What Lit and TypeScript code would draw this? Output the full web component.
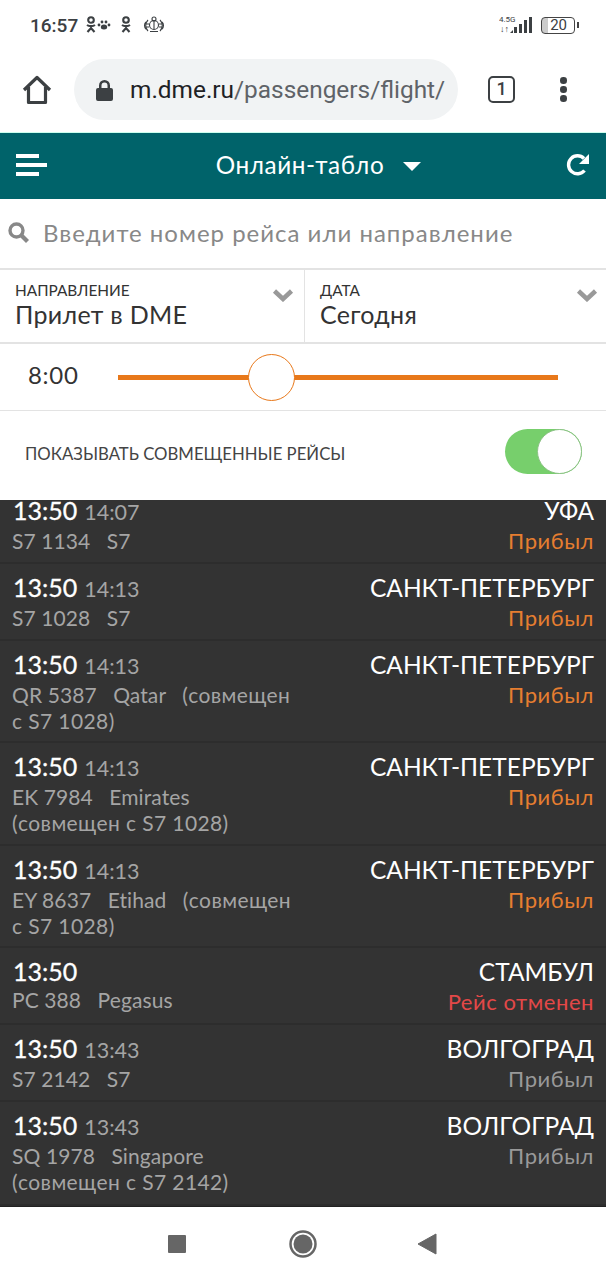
import { LitElement, html, css } from "lit";
import { customElement } from "lit/decorators.js";

interface Flight { sched: string; actual?: string; code: string; air: string; note?: string; br?: boolean; city: string; status: string; kind: "o" | "r" | "g"; h: number; }

const F: Flight[] = [
  { sched: "13:50", actual: "14:07", code: "S7 1134", air: "S7", city: "УФА", status: "Прибыл", kind: "o", h: 64 },
  { sched: "13:50", actual: "14:13", code: "S7 1028", air: "S7", city: "САНКТ-ПЕТЕРБУРГ", status: "Прибыл", kind: "o", h: 77 },
  { sched: "13:50", actual: "14:13", code: "QR 5387", air: "Qatar", note: "(совмещен с S7 1028)", city: "САНКТ-ПЕТЕРБУРГ", status: "Прибыл", kind: "o", h: 102 },
  { sched: "13:50", actual: "14:13", code: "EK 7984", air: "Emirates", note: "(совмещен с S7 1028)", br: true, city: "САНКТ-ПЕТЕРБУРГ", status: "Прибыл", kind: "o", h: 103 },
  { sched: "13:50", actual: "14:13", code: "EY 8637", air: "Etihad", note: "(совмещен с S7 1028)", city: "САНКТ-ПЕТЕРБУРГ", status: "Прибыл", kind: "o", h: 102 },
  { sched: "13:50", code: "PC 388", air: "Pegasus", city: "СТАМБУЛ", status: "Рейс отменен", kind: "r", h: 77 },
  { sched: "13:50", actual: "13:43", code: "S7 2142", air: "S7", city: "ВОЛГОГРАД", status: "Прибыл", kind: "g", h: 77 },
  { sched: "13:50", actual: "13:43", code: "SQ 1978", air: "Singapore", note: "(совмещен с S7 2142)", br: true, city: "ВОЛГОГРАД", status: "Прибыл", kind: "g", h: 104 },
];

@customElement("app-root")
export class AppRoot extends LitElement {
  static styles = css`
    :host { display: block; width: 606px; height: 1280px; overflow: hidden; background: #fff; font-family: Lato, "Open Sans", "Noto Sans", sans-serif; }
    * { box-sizing: border-box; }
    .status { height: 50px; display: flex; align-items: center; justify-content: space-between; padding: 0 31px 0 30px; color: #3c4043; font-family: Roboto, sans-serif; }
    .st-left { display: flex; align-items: center; gap: 8px; font-size: 19px; font-weight: 500; }
    .st-right { display: flex; align-items: center; gap: 8px; }
    .batt { width: 34px; height: 17px; border: 1.5px solid #444; border-radius: 4px; font-size: 15px; line-height: 14px; text-align: right; padding-right: 7px; background: linear-gradient(90deg,#ccc 6px,#fff 6px); position: relative; }
    .batt::after { content: ""; position: absolute; right: -5px; top: 4px; width: 2px; height: 6px; background: #444; }
    .chrome { height: 82px; display: flex; align-items: center; padding: 0 24px 3px 22px; }
    .omni { margin-left: 22px; width: 384px; height: 61px; border-radius: 31px; background: #f1f3f4; display: flex; align-items: center; padding-left: 22px; gap: 17px; overflow: hidden; }
    .url { font: 24.400px/30px Roboto, sans-serif; white-space: nowrap; color: #5f6368; width: 316px; overflow: hidden; }
    .url b { font-weight: 400; color: #202124; }
    .tabs { margin-left: 30px; width: 27px; height: 27px; border: 2.5px solid #3c4043; border-radius: 5px; font: 500 18px/22px Roboto, sans-serif; color: #3c4043; text-align: center; }
    .dots { margin-left: 45px; display: flex; flex-direction: column; gap: 2.5px; }
    .dots i { width: 6.5px; height: 6.5px; border-radius: 50%; background: #3c4043; }
    .bar { height: 67px; background: #00636a; color: #fff; display: flex; align-items: center; justify-content: space-between; padding: 0 16px 3px; border-top: 1px solid #cfe; }
    .title { display: flex; align-items: center; gap: 19px; font-size: 24.3px; letter-spacing: .6px; margin-left: 24px; }
    .tri { width: 0; height: 0; border: 9.5px solid transparent; border-top: 9px solid #fff; border-bottom: 0; margin-top: 4px; }
    .search { height: 71px; display: flex; align-items: center; padding: 0 8px 2px; gap: 14px; border-bottom: 2px solid #e3e3e3; color: #888; font-size: 24px; letter-spacing: 1px; }
    .selects { height: 74px; display: flex; border-bottom: 2px solid #e3e3e3; color: #333; }
    .sel { flex: 0 0 305px; position: relative; padding: 11px 15px 0; border-right: 1px solid #e3e3e3; }
    .sel + .sel { flex: 1; border-right: 0; }
    .lab { font-size: 15.400px; line-height: 18px; }
    .val { font-size: 25px; line-height: 30px; letter-spacing: .3px; }
    .chev { position: absolute; right: 10px; top: 18px; }
    .sel + .sel .chev { right: 8px; }
    .slide { height: 67px; display: flex; align-items: center; padding-left: 28px; border-bottom: 1px solid #e3e3e3; }
    .time { width: 90px; font-size: 24px; color: #333; letter-spacing: .7px; margin-bottom: 6px; }
    .track { position: relative; width: 440px; height: 5px; background: #e8781a; }
    .thumb { position: absolute; left: 130px; top: -21px; width: 47px; height: 47px; border-radius: 50%; background: #fff; border: 1.5px solid #e8781a; }
    .toggle-row { height: 89px; display: flex; align-items: center; justify-content: space-between; padding: 0 24px 0 25px; font-size: 16.750px; color: #444; }
    .toggle { width: 77px; height: 45px; border-radius: 23px; background: #77cf6c; position: relative; margin-top: -8px; }
    .toggle i { position: absolute; right: 0; top: 0; width: 45px; height: 45px; border-radius: 50%; background: #fff; border: 1.5px solid #8cc285; }
    .toggle-label { margin-top: -4px; }
    .list { background: #333; height: 707px; overflow: hidden; border-bottom: 1px solid #222; }
    .row { display: flex; justify-content: space-between; padding: 0 12px 0 13px; border-bottom: 2px solid #2d2d2d; }
    .left { width: 285px; padding-top: 7px; }
    .row:first-child .left, .row:first-child .right { padding-top: 0; margin-top: -6px; }
    .times { display: flex; align-items: baseline; gap: 7px; color: #fff; font-size: 25px; line-height: 33px; -webkit-text-stroke: .3px #fff; }
    .act { color: #a5a5a5; font-size: 21.500px; -webkit-text-stroke: 0; }
    .info { color: #a5a5a5; font-size: 21px; line-height: 26px; margin: -1.5px 0 0 -1px; white-space: pre-wrap; letter-spacing: .1px; }
    .note { letter-spacing: .4px; }
    .right { text-align: right; padding-top: 7px; }
    .city { color: #fff; font-size: 24.500px; line-height: 33px; }
    .stat { font-size: 22px; line-height: 25px; letter-spacing: .55px; margin-top: 1px; }
    .o { color: #e67e30; } .r { color: #e34848; } .g { color: #999; }
    .nav { height: 73px; display: flex; align-items: center; justify-content: center; padding: 1px 2px 0 0; }
    .nav svg { display: block; }
    .gap-a { margin-left: 102px; }
    .gap-b { margin-left: 100px; }
  `;

  private flight(f: Flight) {
    const sep = "   ";
    return html`<div class="row" style="height:${f.h}px">
      <div class="left">
        <div class="times"><span>${f.sched}</span>${f.actual ? html`<span class="act">${f.actual}</span>` : ""}</div>
        <div class="info">${f.code}${sep}${f.air}${f.note ? (f.br ? html`<br /><span class="note">${f.note}</span>` : html`${sep}<span class="note">${f.note}</span>`) : ""}</div>
      </div>
      <div class="right">
        <div class="city">${f.city}</div>
        <div class="stat ${f.kind}">${f.status}</div>
      </div>
    </div>`;
  }

  render() {
    const chev = html`<svg class="chev" width="22" height="14" viewBox="0 0 22 14"><path d="M2.500 3 11 11 19.500 3" fill="none" stroke="#999" stroke-width="4.500"/></svg>`;
    return html`
      <div class="status">
        <div class="st-left"><span>16:57</span>
          <svg width="86" height="18" viewBox="0 0 86 18" fill="none" stroke="#3c4043" stroke-width="2.100">
            <circle cx="5" cy="4" r="2.800"/><path d="M1 9c2 1.500 6 1.500 8 0M5 10v2M1.500 16 5 12l3.500 4"/>
            <g fill="#3c4043" stroke="none"><circle cx="13" cy="9" r="1.400"/><circle cx="16" cy="6" r="1.400"/><circle cx="20" cy="6" r="1.400"/><circle cx="23" cy="9" r="1.400"/><ellipse cx="18" cy="11" rx="3.200" ry="2.500"/></g>
            <circle cx="40" cy="4" r="2.800"/><path d="M36 9c2 1.500 6 1.500 8 0M40 10v2M36.500 16 40 12l3.500 4"/>
            <g stroke-width="1.100"><circle cx="68" cy="9" r="4.500"/><circle cx="68" cy="3" r="2"/><path d="M68 5v8M62 4c-3 3-3 8 0 11M74 4c3 3 3 8 0 11M60 6c-2 2-2 5 0 7M76 6c2 2 2 5 0 7M64 15.500h8M63 8h-3M73 8h3M63 11h-3M73 11h3"/></g>
          </svg>
        </div>
        <div class="st-right">
          <svg width="34" height="20" viewBox="0 0 34 20"><text x="0" y="7" font-size="8" font-family="Roboto, sans-serif" fill="#3c4043">4.5G</text><text x="1" y="17" font-size="9" font-family="Roboto, sans-serif" fill="#3c4043">↓↑</text><g fill="#3c4043"><path d="M11 18l3-3v3z"/><rect x="15" y="12" width="3" height="6"/><rect x="20" y="9" width="3" height="9"/><rect x="25" y="5" width="3" height="13"/><rect x="30" y="2" width="3" height="16"/></g></svg>
          <div class="batt">20</div>
        </div>
      </div>
      <div class="chrome">
        <svg width="30" height="30" viewBox="0 0 30 30" fill="none" stroke="#3c4043" stroke-width="3.200"><path d="M2 15 15 2.500 28 15M6.500 12v15.500h17V12" stroke-linejoin="round"/></svg>
        <div class="omni">
          <svg width="17" height="22" viewBox="0 0 17 22"><path d="M3 9V6.500a5.500 5.500 0 0 1 11 0V9h1a2 2 0 0 1 2 2v9a2 2 0 0 1-2 2H2a2 2 0 0 1-2-2v-9a2 2 0 0 1 2-2zm2.500 0h6V6.500a3 3 0 0 0-6 0z" fill="#3c4043"/></svg>
          <div class="url"><b>m.dme.ru</b>/passengers/flight/</div>
        </div>
        <div class="tabs">1</div>
        <div class="dots"><i></i><i></i><i></i></div>
      </div>
      <div class="bar">
        <svg width="31" height="22" viewBox="0 0 31 22" fill="#fff"><rect y="0" width="23" height="4"/><rect y="9" width="31" height="4"/><rect y="18" width="23" height="4"/></svg>
        <div class="title"><span>Онлайн-табло</span><span class="tri"></span></div>
        <svg width="24" height="24" viewBox="0 0 24 24" fill="none"><path d="M18.500 17.500A9 9 0 1 1 18 5.500" stroke="#fff" stroke-width="3.400"/><path d="M23 1v10H13z" fill="#fff"/></svg>
      </div>
      <div class="search">
        <svg width="21" height="21" viewBox="0 0 21 21" fill="none" stroke="#888"><circle cx="8.500" cy="8.500" r="6.500" stroke-width="3.400"/><path d="m13.500 13.500 6 6" stroke-width="4.200"/></svg>
        <span>Введите номер рейса или направление</span>
      </div>
      <div class="selects">
        <div class="sel"><div class="lab">НАПРАВЛЕНИЕ</div><div class="val">Прилет в DME</div>${chev}</div>
        <div class="sel"><div class="lab">ДАТА</div><div class="val">Сегодня</div>${chev}</div>
      </div>
      <div class="slide"><div class="time">8:00</div><div class="track"><div class="thumb"></div></div></div>
      <div class="toggle-row"><span class="toggle-label">ПОКАЗЫВАТЬ СОВМЕЩЕННЫЕ РЕЙСЫ</span><div class="toggle"><i></i></div></div>
      <div class="list">${F.map((f) => this.flight(f))}</div>
      <div class="nav">
        <svg width="20" height="20" viewBox="0 0 20 20"><rect x="1" y="1" width="18" height="18" rx="1" fill="#666"/></svg>
        <svg class="gap-a" width="28" height="28" viewBox="0 0 28 28"><circle cx="14" cy="14" r="12.500" fill="none" stroke="#666" stroke-width="2.500"/><circle cx="14" cy="14" r="9.500" fill="#666"/></svg>
        <svg class="gap-b" width="20" height="22" viewBox="0 0 20 22"><path d="M1 11 19 1v20z" fill="#666" stroke="#666" stroke-linejoin="round"/></svg>
      </div>
    `;
  }
}
